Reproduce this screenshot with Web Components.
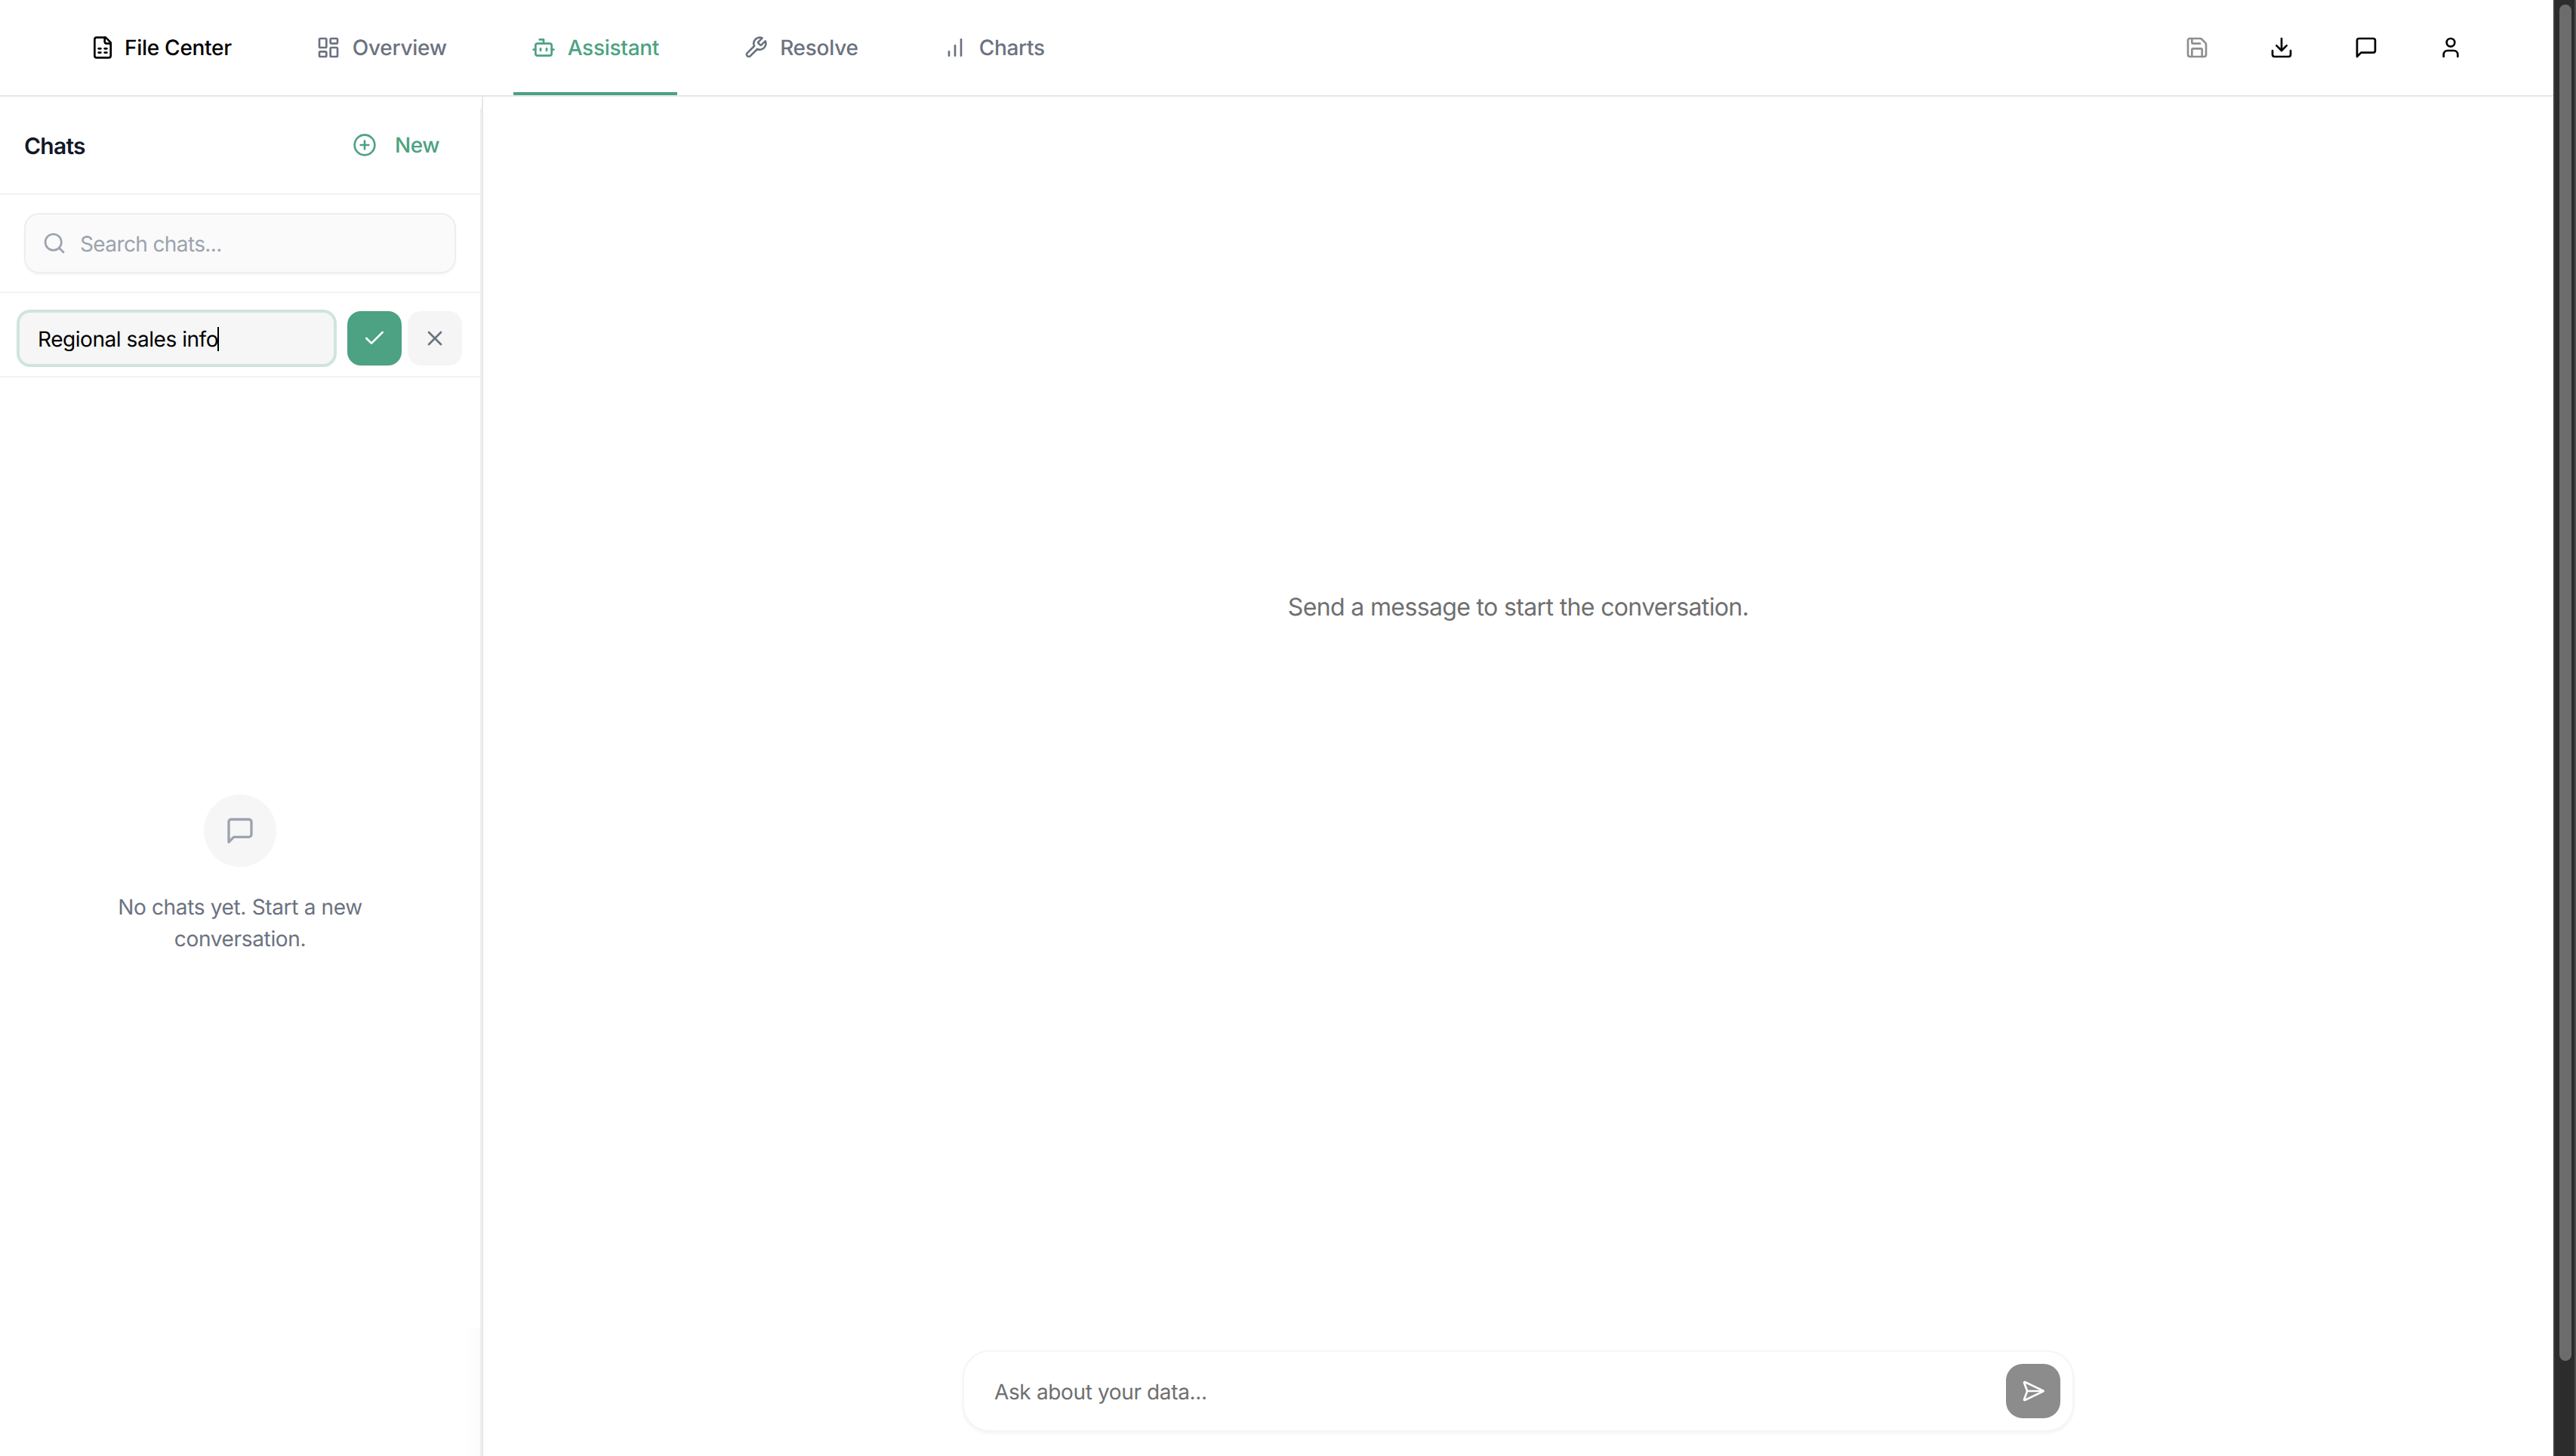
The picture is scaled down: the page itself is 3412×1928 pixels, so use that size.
<!DOCTYPE html>
<html lang="en">
<head>
<meta charset="utf-8">
<title>Assistant</title>
<style>
html,body{margin:0;padding:0;height:100%;background:#fff;overflow:hidden;font-family:Inter,"Liberation Sans",sans-serif;text-rendering:geometricPrecision}
</style>
</head>
<body>
<app-shell>
  <app-header>
    <nav-tab slot="tabs" icon="file" current>File Center</nav-tab>
    <nav-tab slot="tabs" icon="dashboard">Overview</nav-tab>
    <nav-tab slot="tabs" icon="bot" active>Assistant</nav-tab>
    <nav-tab slot="tabs" icon="wrench">Resolve</nav-tab>
    <nav-tab slot="tabs" icon="chart">Charts</nav-tab>
    <icon-button slot="actions" icon="save" muted></icon-button>
    <icon-button slot="actions" icon="download"></icon-button>
    <icon-button slot="actions" icon="message"></icon-button>
    <icon-button slot="actions" icon="user"></icon-button>
  </app-header>
  <chat-sidebar>
    <rename-row value="Regional sales info" slot="rename"></rename-row>
    <empty-state slot="list">No chats yet. Start a new conversation.</empty-state>
  </chat-sidebar>
  <chat-main>Send a message to start the conversation.</chat-main>
</app-shell>
<script>
const ICONS = {
  file:'<path d="M15 2H6a2 2 0 0 0-2 2v16a2 2 0 0 0 2 2h12a2 2 0 0 0 2-2V7Z"/><path d="M14 2v4a2 2 0 0 0 2 2h4"/><path d="M8 13h2"/><path d="M14 13h2"/><path d="M8 17h2"/><path d="M14 17h2"/>',
  dashboard:'<rect width="7" height="9" x="3" y="3" rx="1"/><rect width="7" height="5" x="14" y="3" rx="1"/><rect width="7" height="9" x="14" y="12" rx="1"/><rect width="7" height="5" x="3" y="16" rx="1"/>',
  bot:'<path d="M12 8V4H8"/><rect width="16" height="12" x="4" y="8" rx="2"/><path d="M2 14h2"/><path d="M20 14h2"/><path d="M15 13v2"/><path d="M9 13v2"/>',
  wrench:'<path d="M14.7 6.3a1 1 0 0 0 0 1.4l1.6 1.6a1 1 0 0 0 1.4 0l3.77-3.77a6 6 0 0 1-7.94 7.94l-6.91 6.91a2.12 2.12 0 0 1-3-3l6.91-6.91a6 6 0 0 1 7.94-7.94l-3.76 3.76z"/>',
  chart:'<line x1="18" x2="18" y1="20" y2="4"/><line x1="12" x2="12" y1="20" y2="10"/><line x1="6" x2="6" y1="20" y2="16"/>',
  save:'<path d="M15.2 3a2 2 0 0 1 1.4.6l3.8 3.8a2 2 0 0 1 .6 1.4V19a2 2 0 0 1-2 2H5a2 2 0 0 1-2-2V5a2 2 0 0 1 2-2z"/><path d="M17 21v-7a1 1 0 0 0-1-1H8a1 1 0 0 0-1 1v7"/><path d="M7 3v4a1 1 0 0 0 1 1h7"/>',
  download:'<path d="M12 15V3"/><path d="M21 15v4a2 2 0 0 1-2 2H5a2 2 0 0 1-2-2v-4"/><path d="m7 10 5 5 5-5"/>',
  message:'<path d="M21 15a2 2 0 0 1-2 2H7l-4 4V5a2 2 0 0 1 2-2h14a2 2 0 0 1 2 2z"/>',
  user:'<path d="M19 21v-2a4 4 0 0 0-4-4H9a4 4 0 0 0-4 4v2"/><circle cx="12" cy="7" r="4"/>',
  plus:'<circle cx="12" cy="12" r="10"/><path d="M8 12h8"/><path d="M12 8v8"/>',
  search:'<path d="m21 21-4.34-4.34"/><circle cx="11" cy="11" r="8"/>',
  check:'<path d="M20 6 9 17l-5-5"/>',
  x:'<path d="M18 6 6 18"/><path d="m6 6 12 12"/>',
  send:'<path d="M3.714 3.048a.498.498 0 0 0-.683.627l2.843 7.627a2 2 0 0 1 0 1.396l-2.842 7.627a.498.498 0 0 0 .682.627l18-8.5a.5.5 0 0 0 0-.904z"/><path d="M6 12h16"/>'
};
class Base extends HTMLElement{
  constructor(){super();this.attachShadow({mode:'open'});}
  connectedCallback(){this.shadowRoot.innerHTML=this.render();}
}
customElements.define('ui-icon',class extends Base{
  render(){
    const s=this.getAttribute('size')||32, w=this.getAttribute('stroke')||2;
    return `<style>:host{display:block;width:${s}px;height:${s}px;flex:none;line-height:0}</style>
    <svg xmlns="http://www.w3.org/2000/svg" width="${s}" height="${s}" viewBox="0 0 24 24" fill="none" stroke="currentColor" stroke-width="${w}" stroke-linecap="round" stroke-linejoin="round">${ICONS[this.getAttribute('name')]}</svg>`;
  }
});
customElements.define('app-shell',class extends Base{
  render(){return `<style>
    :host{display:flex;width:3412px;height:1928px;overflow:hidden}
    .page{flex:1;min-width:0;display:flex;flex-direction:column}
    .body{flex:1;min-height:0;display:flex}
    .track{width:26px;flex:none;background:#2c2c2c;border-left:2px solid #3d3d3d;border-right:2px solid #4c4c4c;padding:6px 0 126px;box-sizing:content-box;height:1796px}
    .thumb{width:16px;height:100%;margin-left:6px;background:#6c6c6c;border-radius:8px}
  </style>
  <div class="page"><slot name="h"></slot><div class="body"><slot></slot></div></div>
  <div class="track"><div class="thumb"></div></div>`;}
  connectedCallback(){super.connectedCallback();this.querySelector('app-header').slot='h';}
});
customElements.define('app-header',class extends Base{
  render(){return `<style>
    :host{display:flex;align-items:stretch;justify-content:space-between;height:126px;border-bottom:2px solid #e5e7eb;padding:0 96px;flex:none;font-family:Inter,"Liberation Sans",sans-serif}
    .tabs{display:flex;gap:64px}
    .actions{display:flex;gap:32px;align-items:center}
  </style><div class="tabs"><slot name="tabs"></slot></div><div class="actions"><slot name="actions"></slot></div>`;}
});
customElements.define('nav-tab',class extends Base{
  render(){
    const active=this.hasAttribute('active'),cur=this.hasAttribute('current');
    return `<style>
    :host{display:flex;align-items:center;gap:${cur?13:16}px;padding:4px 24px 0;font-size:28px;font-weight:500;line-height:40px;letter-spacing:-.01em;box-sizing:border-box;border-bottom:4px solid ${active?'#4ca282':'transparent'};color:${active?'#4ca282':cur?'#000':'#6b7280'};white-space:nowrap}
    </style><ui-icon name="${this.getAttribute('icon')}"></ui-icon><span><slot></slot></span>`;}
});
customElements.define('icon-button',class extends Base{
  render(){return `<style>
    :host{display:flex;align-items:center;justify-content:center;width:80px;height:80px;color:${this.hasAttribute('muted')?'#8f8f8f':'#000'}}
    </style><ui-icon name="${this.getAttribute('icon')}"></ui-icon>`;}
});
customElements.define('chat-sidebar',class extends Base{
  render(){return `<style>
    :host{display:flex;flex-direction:column;position:relative;width:638px;flex:none;border-right:2px solid #e7e7ea;font-family:Inter,"Liberation Sans",sans-serif;font-size:28px;letter-spacing:-.015em}
    .head{display:flex;align-items:center;justify-content:space-between;height:128px;border-bottom:2px solid #f2f2f2;padding:0 34px 0 32px}
    h2{margin:0;padding-top:3px;font-size:30px;font-weight:600;color:#111827;line-height:40px;letter-spacing:-.025em}
    .new{display:flex;align-items:center;gap:24px;padding-right:22px;color:#4ca282;font-weight:500}
    .search-wrap{padding:24px 34px 24px 32px;border-bottom:2px solid #f2f2f2}
    .search{display:flex;align-items:center;gap:18px;height:80px;box-sizing:border-box;padding:0 22px;background:#fafafa;border:2px solid #eee;border-radius:20px;box-shadow:0 2px 3px rgba(0,0,0,.04);color:#9ca3af;letter-spacing:-.022em}
    .search span{padding-top:2px}
    .list{flex:1;min-height:0}
    .handle{position:absolute;right:0;top:16px;bottom:0;width:2px;background:#efefef}
    .fade{position:absolute;right:2px;bottom:0;width:20px;height:170px;background:linear-gradient(to right,rgba(250,250,250,0),#fbfbfb)}
  </style>
  <div class="head"><h2>Chats</h2><div class="new"><ui-icon name="plus"></ui-icon><span>New</span></div></div>
  <div class="search-wrap"><div class="search"><ui-icon name="search"></ui-icon><span>Search chats...</span></div></div>
  <slot name="rename"></slot>
  <div class="list"><slot name="list"></slot></div>
  <div class="fade"></div><div class="handle"></div>`;}
});
customElements.define('rename-row',class extends Base{
  render(){return `<style>
    :host{display:flex;align-items:center;gap:8px;padding:24px 26px 14px 24px;border-bottom:2px solid #f2f2f2}
    .field{display:flex;align-items:center;width:420px;height:72px;box-sizing:border-box;margin-right:8px;padding:1px 24px 0;background:#f6f6f6;border:2px solid #cfe4dc;border-radius:16px;box-shadow:0 0 0 2px #cfe4dc;color:#000;font-size:28px;letter-spacing:-.016em;white-space:nowrap}
    .caret{display:inline-block;width:2px;height:32px;background:#000;margin-left:-1px}
    .btn{display:flex;align-items:center;justify-content:center;width:72px;height:72px;border-radius:18px;background:#f5f5f5;color:#6b7280}
    .ok{background:#4ca282;color:#fff}
  </style>
  <div class="field"><span>${this.getAttribute('value')}</span><span class="caret"></span></div>
  <div class="btn ok"><ui-icon name="check"></ui-icon></div>
  <div class="btn"><ui-icon name="x"></ui-icon></div>`;}
});
customElements.define('empty-state',class extends Base{
  render(){return `<style>
    :host{display:flex;flex-direction:column;align-items:center;padding:552px 2px 0 0;gap:32px}
    .c{display:flex;align-items:center;justify-content:center;width:96px;height:96px;border-radius:50%;background:#f6f6f6;color:#9ca3af}
    p{margin:0;width:400px;text-align:center;font-size:28px;line-height:42px;color:#6b7280;letter-spacing:-.012em}
  </style><div class="c"><ui-icon name="message" size="40"></ui-icon></div><p><slot></slot></p>`;}
});
customElements.define('chat-main',class extends Base{
  render(){return `<style>
    :host{flex:1;min-width:0;display:flex;flex-direction:column;align-items:center;font-family:Inter,"Liberation Sans",sans-serif;padding-bottom:32px;box-sizing:border-box}
    .msg{margin-top:652px;font-size:32px;line-height:48px;color:#6f6f6f;letter-spacing:-.02em}
    .composer{margin-top:auto;display:flex;align-items:center;justify-content:space-between;width:1472px;height:108px;box-sizing:border-box;padding:0 16px 0 40px;background:#fff;border:2px solid #f5f5f5;border-radius:36px;box-shadow:0 2px 4px rgba(0,0,0,.05)}
    .ph{font-size:28px;color:#6f6f6f;letter-spacing:-.013em;padding-top:1px}
    .send{display:flex;align-items:center;justify-content:center;width:72px;height:72px;border-radius:22px;background:#8c8c8c;color:#fff}
  </style>
  <div class="msg"><slot></slot></div>
  <div class="composer"><span class="ph">Ask about your data...</span><div class="send"><ui-icon name="send"></ui-icon></div></div>`;}
});
</script>
</body>
</html>
